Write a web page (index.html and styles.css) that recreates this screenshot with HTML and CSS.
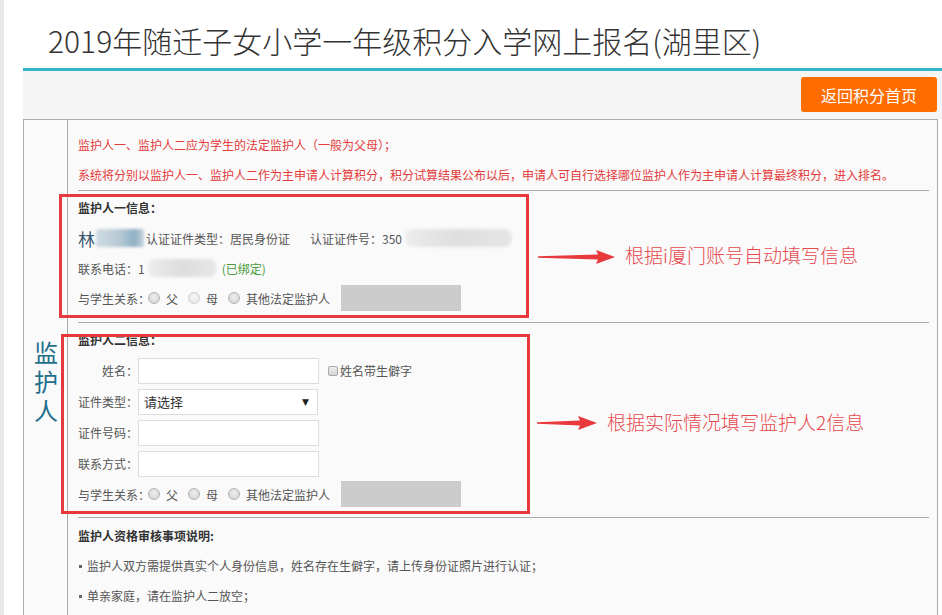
FILE: index.html
```html
<!DOCTYPE html>
<html lang="zh-CN">
<head>
    <meta charset="UTF-8">
    <meta name="viewport" content="width=device-width, initial-scale=1.0">
    <title>2019年随迁子女小学一年级积分入学网上报名(湖里区)</title>
    <link rel="stylesheet" href="styles.css">
</head>
<body>
    <div class="wrap">
        <h1 class="title">2019年随迁子女小学一年级积分入学网上报名(湖里区)</h1>
        <div class="topline"></div>
        <div class="toolbar">
            <button class="back-btn">返回积分首页</button>
        </div>

        <div class="main">
            <div class="side"><span class="side-text">监护人</span></div>
            <div class="content">
                <p class="notice">监护人一、监护人二应为学生的法定监护人（一般为父母）；</p>
                <p class="notice">系统将分别以监护人一、监护人二作为主申请人计算积分，积分试算结果公布以后，申请人可自行选择哪位监护人作为主申请人计算最终积分，进入排名。</p>

                <div class="section sec-one">
                    <div class="sec-title">监护人一信息：</div>
                    <div class="row">
                        <span class="name">林</span><span class="blur blur-name"></span>
                        <span class="gap-s">认证证件类型：居民身份证</span>
                        <span class="gap-l">认证证件号：350</span><span class="blur blur-id"></span>
                    </div>
                    <div class="row">
                        <span>联系电话：1</span><span class="blur blur-phone"></span>
                        <span class="bound">(已绑定)</span>
                    </div>
                    <div class="row">
                        <span>与学生关系：</span>
                        <span class="radio"></span><span class="opt">父</span>
                        <span class="radio light"></span><span class="opt">母</span>
                        <span class="radio"></span><span class="opt">其他法定监护人</span>
                        <span class="grey-box"></span>
                    </div>
                </div>

                <div class="section sec-two">
                    <div class="sec-title">监护人二信息：</div>
                    <div class="row form-row">
                        <label class="lbl">姓名：</label>
                        <span class="input"></span>
                        <span class="check"></span><span class="check-text">姓名带生僻字</span>
                    </div>
                    <div class="row form-row">
                        <label class="lbl">证件类型：</label>
                        <div class="select"><span>请选择</span><span class="arrow">▼</span></div>
                    </div>
                    <div class="row form-row">
                        <label class="lbl">证件号码：</label>
                        <span class="input"></span>
                    </div>
                    <div class="row form-row">
                        <label class="lbl">联系方式：</label>
                        <span class="input"></span>
                    </div>
                    <div class="row">
                        <span>与学生关系：</span>
                        <span class="radio"></span><span class="opt">父</span>
                        <span class="radio"></span><span class="opt">母</span>
                        <span class="radio"></span><span class="opt">其他法定监护人</span>
                        <span class="grey-box"></span>
                    </div>
                </div>

                <div class="section sec-three">
                    <div class="sec-title">监护人资格审核事项说明:</div>
                    <p class="tip"><span class="dot"></span>监护人双方需提供真实个人身份信息，姓名存在生僻字，请上传身份证照片进行认证；</p>
                    <p class="tip"><span class="dot"></span>单亲家庭，请在监护人二放空；</p>
                </div>
            </div>

            <!-- annotations -->
            <div class="mark mark-one"></div>
            <div class="mark mark-two"></div>
            <svg class="arrow-line arrow-one" width="77" height="16" viewBox="0 0 77 16">
                <path d="M0 7.2 L60 5.6 L58 1 L77 8 L58 15 L60 10.4 L0 8.8 Z" fill="#e8393c"/>
            </svg>
            <svg class="arrow-line arrow-two" width="60" height="16" viewBox="0 0 60 16">
                <path d="M0 7.2 L43 5.6 L41 1 L60 8 L41 15 L43 10.4 L0 8.8 Z" fill="#e8393c"/>
            </svg>
            <div class="note note-one">根据i厦门账号自动填写信息</div>
            <div class="note note-two">根据实际情况填写监护人2信息</div>
        </div>
    </div>
</body>
</html>
```

FILE: styles.css
```css
body {
    margin: 0;
    min-height: 100vh;
    font-family: "Microsoft YaHei", "Noto Sans CJK SC", sans-serif;
    font-size: 12px;
    color: #555;
    background-color: #fff;
    border-left: 4px solid #e9e9e9;
    overflow: hidden;
}

.wrap {
    margin-left: 19px;
}

.title {
    margin: 0;
    height: 68px;
    box-sizing: border-box;
    padding: 12px 0 0 25px;
    font-size: 30px;
    line-height: 56px;
    font-weight: 300;
    color: #333;
    white-space: nowrap;
}

.topline {
    height: 3px;
    background-color: #36b4c8;
}

.toolbar {
    height: 48px;
    box-sizing: border-box;
    padding: 6px 5px 0 0;
    background-color: #f5f5f5;
    display: flex;
    justify-content: flex-end;
    align-items: flex-start;
}

.back-btn {
    width: 136px;
    height: 35px;
    border: none;
    border-radius: 3px;
    background-color: #ff6c00;
    color: #fff;
    font-family: inherit;
    font-size: 16px;
    cursor: pointer;
}

.main {
    position: relative;
    display: flex;
    width: 915px;
    box-sizing: border-box;
    border: 1px solid #aaa;
    background-color: #fafafa;
}

.side {
    flex-shrink: 0;
    width: 43px;
    border-right: 1px solid #aaa;
    padding-top: 221px;
    display: flex;
    justify-content: center;
    align-items: flex-start;
}

.side-text {
    writing-mode: vertical-rl;
    font-size: 24px;
    line-height: 24px;
    letter-spacing: 5px;
    color: #1f6f8b;
}

.content {
    flex: 1;
    padding: 10px 8px 40px 10px;
}

.notice {
    margin: 0;
    line-height: 30px;
    color: #e43b3b;
    white-space: nowrap;
}

.section {
    border-top: 1px solid #aaa;
    padding: 2px 0 9px;
}

.sec-two {
    padding-bottom: 8px;
}

.sec-three {
    padding-top: 3px;
}

.sec-title {
    line-height: 30px;
    font-weight: bold;
    color: #333;
}

.row {
    height: 30px;
    display: flex;
    align-items: center;
    white-space: nowrap;
}

.form-row {
    height: 31px;
}

.name {
    font-size: 17px;
    color: #3b5670;
}

.blur {
    display: inline-block;
    height: 18px;
    border-radius: 8px;
    filter: blur(1.5px);
}

.blur-name {
    width: 48px;
    margin-left: 1px;
    border-radius: 2px;
    background: linear-gradient(90deg, #d0dce3, #b6c8d3 50%, #8fb0c4 80%, #c5d4dd);
}

.blur-id {
    width: 107px;
    margin-left: 3px;
    background: linear-gradient(90deg, #ececec, #dedede 50%, #e6e6e6);
}

.blur-phone {
    width: 69px;
    margin-left: 3px;
    background: linear-gradient(90deg, #ececec, #dcdcdc 50%, #e8e8e8);
}

.gap-s {
    margin-left: 2px;
}

.gap-l {
    margin-left: 20px;
}

.bound {
    margin-left: 5px;
    color: #4a9a3a;
}

.radio {
    width: 12px;
    height: 12px;
    box-sizing: border-box;
    border-radius: 50%;
    border: 1px solid #b5b5b5;
    background: radial-gradient(circle at 50% 40%, #eee, #cfcfcf);
    margin: 0 6px 0 -2px;
}

.radio.light {
    border-color: #d2d2d2;
    background: radial-gradient(circle at 50% 40%, #f6f6f6, #e2e2e2);
}

.opt {
    margin-right: 12px;
}

.grey-box {
    width: 120px;
    height: 26px;
    margin-left: -1px;
    background-color: #ccc;
}

.lbl {
    width: 60px;
    text-align: right;
}

.input {
    width: 181px;
    height: 26px;
    box-sizing: border-box;
    border: 1px solid #ddd;
    background-color: #fff;
}

.check {
    width: 10px;
    height: 10px;
    box-sizing: border-box;
    margin-left: 9px;
    border: 1px solid #aaa;
    border-radius: 2px;
    background: linear-gradient(#eee, #d4d4d4);
}

.check-text {
    margin-left: 2px;
}

.select {
    width: 180px;
    height: 26px;
    box-sizing: border-box;
    border: 1px solid #ddd;
    background-color: #fff;
    display: flex;
    align-items: center;
    justify-content: space-between;
    padding: 0 8px 0 5px;
    font-size: 13px;
    color: #333;
}

.select .arrow {
    font-size: 9px;
    color: #222;
    font-family: "DejaVu Sans", sans-serif;
}

.tip {
    margin: 0;
    line-height: 30px;
    white-space: nowrap;
    display: flex;
    align-items: center;
}

.dot {
    width: 3px;
    height: 3px;
    margin: 0 5px 0 1px;
    background-color: #666;
}

/* annotations drawn over the form */
.mark {
    position: absolute;
    box-sizing: border-box;
    border: 3px solid #e5393e;
}

.mark-one {
    left: 35px;
    top: 74px;
    width: 470px;
    height: 124px;
}

.mark-two {
    left: 37px;
    top: 214px;
    width: 469px;
    height: 180px;
}

.arrow-line {
    position: absolute;
}

.arrow-one {
    left: 514px;
    top: 129px;
}

.arrow-two {
    left: 513px;
    top: 295px;
}

.note {
    position: absolute;
    font-size: 19px;
    line-height: 24px;
    font-weight: 300;
    color: #e6494e;
    white-space: nowrap;
}

.note-one {
    left: 601px;
    top: 123px;
}

.note-two {
    left: 583px;
    top: 290px;
}
```
